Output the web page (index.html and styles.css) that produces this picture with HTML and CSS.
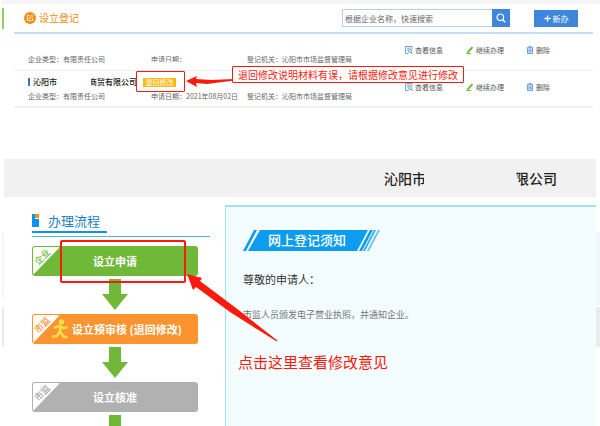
FILE: index.html
```html
<!DOCTYPE html>
<html lang="zh-CN">
<head>
<meta charset="utf-8">
<meta name="viewport" content="width=device-width, initial-scale=1">
<title>设立登记</title>
<link rel="stylesheet" href="styles.css">
</head>
<body>
<svg class="defs" aria-hidden="true">
  <symbol id="i-view" viewBox="0 0 8 8"><path d="M7 3.500V.5H.5v7h3M2 2.200h3.500M2 4h1.500" fill="none" stroke="#4a90dc" stroke-width=".8"/><circle cx="5" cy="5" r="1.500" fill="#fff" stroke="#4a90dc" stroke-width=".8"/><path d="M6 6l1.700 1.700" stroke="#4a90dc"/></symbol>
  <symbol id="i-edit" viewBox="0 0 8 8"><path d="M1.400 5.300L5.800.6l1.400 1.200L2.900 6.500l-2 .4z" fill="#6cb92d"/><path d="M.3 7.500h4.500" stroke="#6cb92d"/></symbol>
  <symbol id="i-del" viewBox="0 0 8 8"><path d="M1.500 2v5.500h5V2z" fill="#cfe2f7"/><path d="M1.500 2v5.500h5V2M.8 1.700h6.400M2.800 1.500V.5h2.400v1M3.200 3.200v3M4.800 3.200v3" fill="none" stroke="#4a90dc" stroke-width=".8"/></symbol>
  <symbol id="i-down" viewBox="0 0 26 31"><path d="M7 0h12v15h7L13 31 0 15h7z" fill="#6fb838"/></symbol>
</svg>

<section class="records">
  <header class="records-head">
    <h1><svg viewBox="0 0 12 12" aria-hidden="true"><circle cx="6" cy="6" r="6" fill="#f68b0c"/><path d="M8.700 6v2.700H3.300V3.300H6M5 7l.3-1.400L8.300 2.600l1 1-3 3z" fill="none" stroke="#fff" stroke-width=".8"/></svg>设立登记</h1>
    <form class="search">
      <input type="text" aria-label="搜索" placeholder="根据企业名称，快速搜索">
      <button type="button" aria-label="搜索"><svg viewBox="0 0 10 10"><circle cx="4.300" cy="4.300" r="3.300" fill="none" stroke="#fff" stroke-width="1.200"/><path d="M6.700 6.700l2.500 2.500" stroke="#fff" stroke-width="1.400"/></svg></button>
    </form>
    <button type="button" class="new"><svg viewBox="0 0 8 8" aria-hidden="true"><path d="M4 .5v7M.5 4h7" stroke="#fff" stroke-width="1.500"/></svg>新办</button>
  </header>
  <ul class="rows">
    <li class="row">
      <span class="info c1">企业类型：有限责任公司</span>
      <span class="info c2 masked">申请日期：</span>
      <span class="info c3">登记机关：沁阳市市场监督管理局</span>
      <a class="action c4" href="#"><svg><use href="#i-view"/></svg>查看信息</a>
      <a class="action c5" href="#"><svg><use href="#i-edit"/></svg>继续办理</a>
      <a class="action c6" href="#"><svg><use href="#i-del"/></svg>删除</a>
    </li>
    <li class="row">
      <div class="company">
        <span class="name-start">沁阳市</span>
        <span class="name-end">商贸有限公司</span>
        <span class="badge">退回修改
          <span class="badge-frame"></span>
          <svg class="badge-arrow" viewBox="0 0 48 12" aria-hidden="true"><path d="M0 6L11 1 10 4l15 1 23-1v1.500L21 9 10 8l1 4z" fill="#fb1a0c"/></svg>
          <span class="callout">退回修改说明材料有误，请根据修改意见进行修改</span>
        </span>
      </div>
      <span class="info c1">企业类型：有限责任公司</span>
      <span class="info c2">申请日期：2021年08月02日</span>
      <span class="info c3">登记机关：沁阳市市场监督管理局</span>
      <a class="action c4" href="#"><svg><use href="#i-view"/></svg>查看信息</a>
      <a class="action c5" href="#"><svg><use href="#i-edit"/></svg>继续办理</a>
      <a class="action c6" href="#"><svg><use href="#i-del"/></svg>删除</a>
    </li>
  </ul>
</section>

<main class="detail">
  <div class="band"><span class="band-start">沁阳市</span><span class="band-end">限公司</span></div>
  <div class="columns">
    <aside class="flow">
      <div class="flow-head"><h2><svg viewBox="0 0 8 13" aria-hidden="true"><path d="M0 0h3v5h4v8H0z" fill="#0c93ee"/><path d="M3 0h4v4H3z" fill="#f98d1e"/></svg>办理流程</h2></div>
      <button type="button" class="step green"><span class="corner"><span>企业</span></span>设立申请<span class="step-frame"></span>
        <svg class="step-arrow" viewBox="0 0 92 68" aria-hidden="true"><path d="M0 0l15 4-2 3L49 34l42 33-2 0L43 38 9 13l-3 3z" fill="#fb1a0c"/></svg>
      </button>
      <svg class="down"><use href="#i-down"/></svg>
      <button type="button" class="step orange"><span class="corner"><span>市监</span></span><svg class="runner" viewBox="0 0 16 20" aria-hidden="true"><circle cx="9.500" cy="3" r="2.700" fill="#efe04a"/><path d="M3 8.500l5-1.500 3 2 3.500-.5M8.500 7.500L8 12.500l4 5.500h2.500M8 12.500L5 17l-4 .5" fill="none" stroke="#efe04a" stroke-width="2.600" stroke-linecap="round" stroke-linejoin="round"/></svg>设立预审核 (退回修改)</button>
      <svg class="down"><use href="#i-down"/></svg>
      <button type="button" class="step gray"><span class="corner"><span>市监</span></span>设立核准</button>
      <svg class="down"><use href="#i-down"/></svg>
    </aside>
    <article class="notice">
      <h2 class="banner"><svg viewBox="0 0 138 21" aria-hidden="true"><path d="M0 21L11 0h3L3 21zM5 21L17 0h108l-11 21zM116 21l11-21h3l-11 21z" fill="#0d9df0"/><path d="M120 21l11-21h2l-11 21z" fill="#2dacf2"/><path d="M124 21l11-21h2l-11 21z" fill="#63c4f5"/></svg><span>网上登记须知</span></h2>
      <p class="greeting">尊敬的申请人：</p>
      <p class="body-text">市监人员颁发电子营业执照，并通知企业。</p>
      <p class="hint">点击这里查看修改意见</p>
    </article>
  </div>
</main>
</body>
</html>
```
FILE: styles.css
```css
* { box-sizing: border-box; }

body {
  margin: 0;
  height: 100vh;
  overflow: hidden;
  display: flex;
  flex-direction: column;
  font-family: "Noto Sans CJK SC", sans-serif;
  font-size: 7px;
  color: #666;
  background:
    linear-gradient(#f5f5f5, #f5f5f5) 2px 0 / 100% 4px no-repeat,
    linear-gradient(#92cf5c, #92cf5c) 2px 8px / 2px 21px no-repeat,
    linear-gradient(#ebebeb, #ebebeb) 2px 307px / 2px 40px no-repeat,
    linear-gradient(#ebebeb, #ebebeb) 100% 307px / 4px 40px no-repeat,
    linear-gradient(#f4f6fd, #f4f6fd) 2px 232px / 2px 66px no-repeat,
    linear-gradient(#f3f5fe, #f3f5fe) 100% 232px / 4px 73px no-repeat,
    #fff;
}

h1, h2, p, ul { margin: 0; padding: 0; }
button { font-family: inherit; border: 0; padding: 0; }
svg { display: block; flex: none; }
.defs { position: absolute; width: 0; height: 0; }

.records { margin: 4px 7px 0 14px; }

.records-head {
  display: flex;
  align-items: center;
  height: 30px;
  padding: 0 15px 0 10px;
  border-bottom: 2px solid #bfe0f2;
}

.records-head h1 {
  display: flex;
  align-items: center;
  gap: 3px;
  margin-right: auto;
  font-size: 10px;
  font-weight: 400;
  line-height: 14px;
  color: #f68b0c;
}
.records-head h1 svg { width: 12px; height: 12px; }

.search { display: flex; width: 168px; height: 18px; }
.search input {
  flex: 1;
  min-width: 0;
  padding: 0 2px;
  border: 1px solid #b3d0f3;
  border-right: 0;
  font-family: inherit;
  font-size: 8px;
  background: #fff;
}
.search input::placeholder { color: #666; opacity: 1; }
.search button {
  display: grid;
  place-items: center;
  width: 18px;
  background: #3e87dd;
}
.search button svg { width: 10px; height: 10px; }

.new {
  display: flex;
  align-items: center;
  justify-content: center;
  gap: 2px;
  width: 44px;
  height: 17px;
  margin-left: 24px;
  font-size: 8px;
  color: #fff;
  background: #3e87dd;
}
.new svg { width: 7px; height: 7px; }

.rows { list-style: none; }

.row {
  display: grid;
  grid-template-columns: 123fr 96fr 158fr 61fr 60fr 67fr;
  grid-template-rows: 14px 10px;
  row-gap: 2px;
  height: 37px;
  padding: 4px 0 0 14px;
  border-bottom: 1px solid #eee;
  white-space: nowrap;
}
.row:last-child { border-bottom: 2px solid #f1f1f1; }

.info { grid-row: 2; line-height: 10px; }
.c1 { grid-column: 1; }
.c2 { grid-column: 2; }
.c3 { grid-column: 3; }
.c4 { grid-column: 4; }
.c5 { grid-column: 5; }
.c6 { grid-column: 6; }
.masked { clip-path: inset(2px 0 2px 0); }

.action {
  grid-row: 1 / 3;
  display: flex;
  align-items: center;
  gap: 2px;
  height: 24px;
  color: #555;
  text-decoration: none;
}
.action svg { width: 8px; height: 8px; }

.company {
  grid-row: 1;
  grid-column: 1 / 4;
  display: flex;
  align-items: center;
  line-height: 12px;
  font-size: 8px;
  font-weight: 500;
  color: #222;
}
.name-start {
  width: 29px;
  padding-left: 3px;
  border-left: 2px solid #2a7bd0;
  line-height: 8px;
}
.name-end { margin-left: 32px; clip-path: inset(0 0 0 2px); }

.badge {
  position: relative;
  width: 33px;
  margin-left: 6px;
  line-height: 9px;
  font-size: 7px;
  font-weight: 400;
  text-align: center;
  color: #fff;
  background: #fdb813;
}
.badge-frame {
  position: absolute;
  inset: -7px -9px -5px -7px;
  border: 1px solid #fb1a0c;
  border-radius: 1px;
}
.badge-arrow {
  position: absolute;
  left: 43px;
  top: -3px;
  width: 48px;
  height: 12px;
}
.callout {
  position: absolute;
  left: 89px;
  top: -12px;
  padding: 0 5px;
  border: 1px solid #fb1a0c;
  border-radius: 1px;
  font-size: 10px;
  line-height: 15px;
  color: #fb1a0c;
  background: #fff;
}

.detail {
  flex: 1;
  min-height: 0;
  display: flex;
  flex-direction: column;
  margin: 51px 4px 0;
}

.band {
  display: flex;
  align-items: center;
  justify-content: flex-end;
  gap: 89px;
  flex: none;
  height: 38px;
  padding-right: 39px;
  font-size: 14px;
  font-weight: 500;
  color: #222;
  background: #f1f1f1;
}
.band-start { clip-path: inset(0 2px 0 0); }
.band-end { clip-path: polygon(0 0, 100% 0, 100% 100%, 5px 100%); }

.columns {
  flex: 1;
  min-height: 0;
  display: flex;
  margin-top: 8px;
}

.flow { width: 221px; flex: none; padding: 5px 0 0 28px; }

.flow-head {
  width: 178px;
  margin-bottom: 9px;
  padding-bottom: 3px;
  border-bottom: 1px solid #4db2f3;
}
.flow-head h2 {
  display: flex;
  align-items: center;
  gap: 8px;
  width: 75px;
  border-bottom: 2px solid #0c93ee;
  font-size: 13px;
  font-weight: 400;
  line-height: 21px;
  color: #1b80c0;
  white-space: nowrap;
}
.flow-head svg { width: 8px; height: 13px; }

.step {
  position: relative;
  display: flex;
  align-items: center;
  justify-content: center;
  width: 166px;
  height: 30px;
  border-radius: 3px;
  font-size: 11px;
  font-weight: 700;
  color: #fff;
}
.green { background: #6fb838; --tone: #6fb838; }
.orange { background: #fb942f; --tone: #fb942f; padding-left: 4px; }
.gray { background: #b1b1b1; --tone: #a6a6a6; }

.corner {
  position: absolute;
  inset: 1px auto 1px 1px;
  width: 27px;
  border-radius: 2px;
  background: #fff;
  clip-path: polygon(0 0, 100% 0, 0 100%);
  font-size: 9px;
  font-weight: 500;
  line-height: 10px;
  color: var(--tone);
}
.corner span {
  position: absolute;
  left: 0;
  top: 5px;
  width: 19px;
  transform: rotate(-45deg);
}

.runner { width: 16px; height: 20px; margin-right: 4px; }

.step-frame {
  position: absolute;
  inset: -6px 12px -7px 28px;
  border: 2px solid #fb1a0c;
  border-radius: 2px;
}
.step-arrow {
  position: absolute;
  left: 155px;
  top: 28px;
  z-index: 1;
  width: 92px;
  height: 68px;
}

.down { width: 26px; height: 31px; margin: 3px 0 4px 70px; }

.notice {
  flex: 1;
  min-width: 0;
  padding: 23px 0 0 17px;
  border: solid #a5dcf6;
  border-width: 2px 0 0 1px;
  background: #f3fdff;
}

.banner {
  position: relative;
  width: 138px;
  height: 21px;
  padding-right: 10px;
  font-size: 13px;
  line-height: 20px;
  font-weight: 500;
  text-align: center;
  color: #fff;
}
.banner svg { position: absolute; inset: 0; width: 138px; height: 21px; }
.banner span { position: relative; }

.greeting {
  margin-top: 19px;
  font-size: 11px;
  line-height: 18px;
  color: #333;
}
.body-text {
  margin-top: 20px;
  font-size: 9px;
  line-height: 14px;
  color: #777;
}
.hint {
  margin-top: 29px;
  margin-left: -5px;
  font-size: 15px;
  line-height: 22px;
  color: #fb1a0c;
}
```
